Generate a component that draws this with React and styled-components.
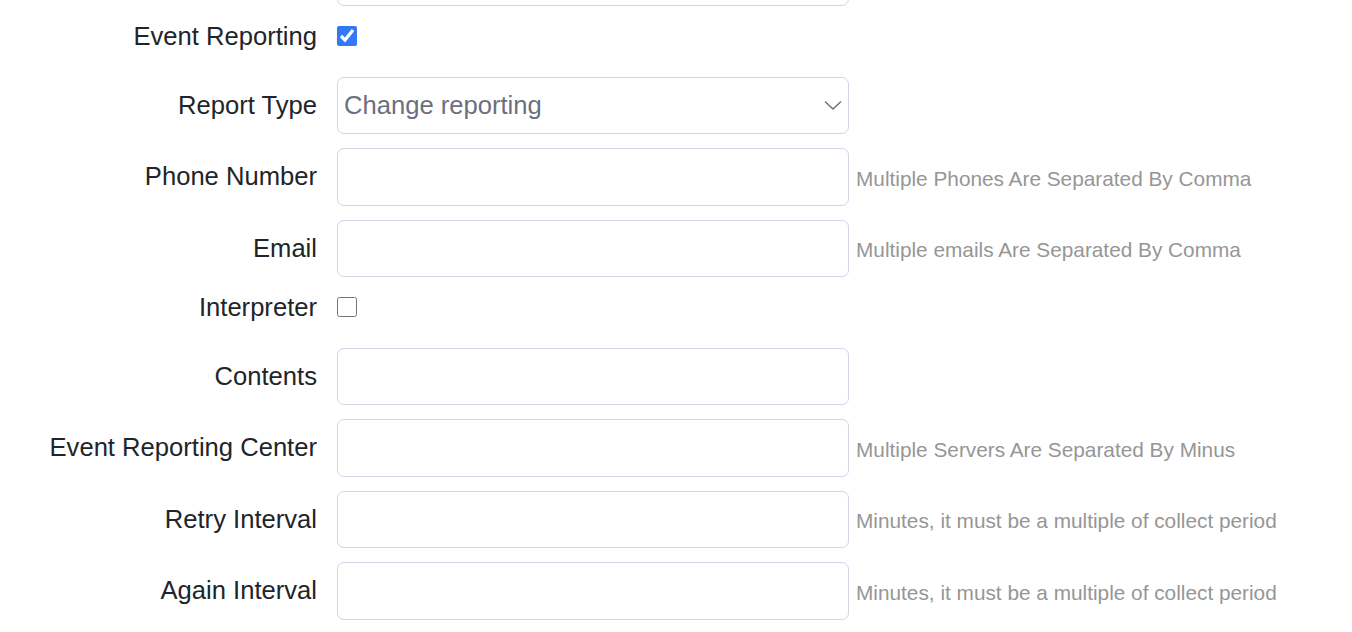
import styled, { createGlobalStyle } from "styled-components"

const GlobalStyle = createGlobalStyle`
    html, body {
        margin: 0;
        padding: 0;
        background: #fff;
        font-family: "Liberation Sans", Arial, sans-serif;
        overflow: hidden;
    }
`

const Form = styled.form`
    margin-top: -51.5px;
    display: flex;
    flex-direction: column;
`

const Row = styled.div`
    display: grid;
    grid-template-columns: 337px 512px auto;
    align-items: center;
    height: ${props => props.$check ? "26px" : "57.5px"};
    margin-bottom: ${props => props.$check ? "30.5px" : "14px"};
`

const Label = styled.label`
    text-align: right;
    padding-right: 20px;
    padding-top: ${props => props.$check ? "2px" : "0"};
    font-size: 25.6px;
    color: #212529;
    white-space: nowrap;
`

const Input = styled.input`
    box-sizing: border-box;
    width: 512px;
    height: 57.5px;
    border: 1px solid #d6d3e6;
    border-radius: 7px;
    padding: 0 8px;
    font-size: 25.6px;
    font-family: inherit;
    outline: none;
    background: #fff;
`

const SelectBox = styled.div`
    position: relative;
    box-sizing: border-box;
    width: 512px;
    height: 57.5px;
    border: 1px solid #d6d3e6;
    border-radius: 7px;
    display: flex;
    align-items: center;
    padding: 0 6px;
    font-size: 25.6px;
    color: #6c6f7e;
`

const Chevron = styled.svg`
    position: absolute;
    right: 6px;
    top: 50%;
    margin-top: -6px;
`

const Check = styled.input`
    margin: 0;
    width: 20px;
    height: 20px;
    accent-color: #3478f6;
    justify-self: start;
`

const Help = styled.span`
    margin-left: 7px;
    margin-top: 4px;
    font-size: 20.8px;
    color: #969696;
    white-space: nowrap;
`

function Field({ label, help }) {
    return (
        <Row>
            <Label>{label}</Label>
            <Input type="text" />
            {help ? <Help>{help}</Help> : <span />}
        </Row>
    )
}

function CheckField({ label, checked }) {
    return (
        <Row $check>
            <Label $check>{label}</Label>
            <Check type="checkbox" defaultChecked={checked} />
            <span />
        </Row>
    )
}

function App() {
    const minutes = "Minutes, it must be a multiple of collect period"
    return (
        <>
            <GlobalStyle />
            <Form>
                <Field label="" />
                <CheckField label="Event Reporting" checked />
                <Row>
                    <Label>Report Type</Label>
                    <SelectBox>
                        Change reporting
                        <Chevron width="18" height="12" viewBox="0 0 18 12">
                            <path d="M1 2.5 L9 10 L17 2.5" fill="none" stroke="#6c6f7e" strokeWidth="1.4" />
                        </Chevron>
                    </SelectBox>
                    <span />
                </Row>
                <Field label="Phone Number" help="Multiple Phones Are Separated By Comma" />
                <Field label="Email" help="Multiple emails Are Separated By Comma" />
                <CheckField label="Interpreter" />
                <Field label="Contents" />
                <Field label="Event Reporting Center" help="Multiple Servers Are Separated By Minus" />
                <Field label="Retry Interval" help={minutes} />
                <Field label="Again Interval" help={minutes} />
            </Form>
        </>
    )
}

export default App
